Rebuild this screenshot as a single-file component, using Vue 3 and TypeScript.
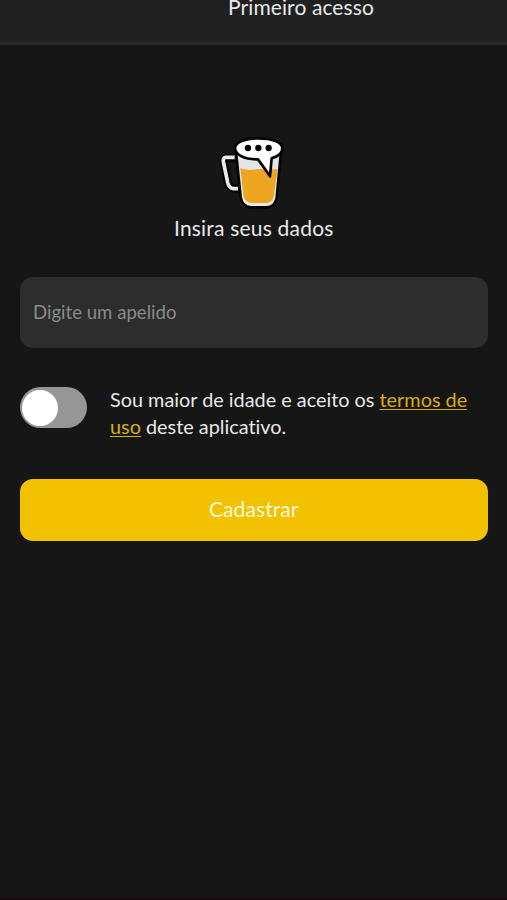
<script setup lang="ts">
import { ref } from 'vue'

const nickname = ref<string>('')
const accepted = ref<boolean>(false)
</script>

<template>
  <div class="screen">
    <header class="header"><h1 class="title">Primeiro acesso</h1></header>
    <main class="content">
      <svg class="logo" viewBox="0 0 255 264" aria-hidden="true">
        <path d="M80 91H50Q40 92 42 104L54 165Q58 180 71 181H88" fill="none" stroke="#060606" stroke-width="25" stroke-linejoin="round" />
        <path d="M74 88H47Q38 89 40 101L53 163Q57 180 70 182H84" fill="none" stroke="#e9e9e9" stroke-width="11" stroke-linejoin="round" />
        <path d="M61 106H69L75 161H71Z" fill="#191919" />
        <path d="M78 72 92 207Q96 237 122 238H170Q195 237 200 209L213 72Z" fill="#e5e5e5" stroke="#060606" stroke-width="8" />
        <path d="M91 120Q112 130 143 123L203 124L191 207Q187 224 167 225H127Q106 224 101 207Z" fill="#eda522" />
        <path d="M75 60C75 42 106 31 146 31S217 42 217 60C217 76 203 86 185 91L180 145Q161 117 144 94C101 95 75 79 75 60Z" fill="#fff" stroke="#050505" stroke-width="8" stroke-linejoin="round" />
        <circle cx="114" cy="60" r="9.5" fill="#080808" /><circle cx="145" cy="60" r="9.5" fill="#080808" /><circle cx="176" cy="60" r="9.5" fill="#080808" />
      </svg>
      <h2 class="subtitle">Insira seus dados</h2>
      <input v-model="nickname" class="field" type="text" placeholder="Digite um apelido" />
      <div class="terms">
        <button class="switch" :class="{ on: accepted }" type="button" role="switch" :aria-checked="accepted" @click="accepted = !accepted"><span class="knob"></span></button>
        <p class="terms-text">Sou maior de idade e aceito os <a class="link">termos de</a><br /><a class="link">uso</a> deste aplicativo.</p>
      </div>
      <button class="submit" type="button">Cadastrar</button>
    </main>
  </div>
</template>

<style>
body { margin: 0; background: #161616; }
</style>

<style scoped>
.screen { box-sizing: border-box; height: 900px; overflow: hidden; background: #161616; border-bottom: 2px solid #120a10; color: #e8e8e8; font-family: Lato, "Noto Sans", sans-serif; font-size: 21px; font-variant-ligatures: none; }
.header { box-sizing: border-box; height: 45px; background: #202020; border-bottom: 3px solid #292929; overflow: hidden; }
.title { margin: -6px 0 0 228px; font-size: 21px; line-height: 25px; font-weight: 400; letter-spacing: 0.1px; white-space: nowrap; }
.content { display: flex; flex-direction: column; padding: 83px 19.5px 0 20px; }
.logo { display: block; width: 85px; height: 88px; margin-left: 190px; }
.subtitle { margin: -1px 0 1px; height: 26px; font-size: 21px; line-height: 26px; font-weight: 400; text-align: center; letter-spacing: 0.2px; }
.field { box-sizing: border-box; width: 100%; height: 71px; margin-top: 35px; padding: 0 13px 2px; border: 0; border-radius: 13px; outline: 0; background: #2d2d2d; color: #e8e8e8; font: inherit; font-size: 18.6px; }
.field::placeholder { color: #8a8a8a; opacity: 1; }
.terms { display: flex; margin-top: 39px; height: 53px; }
.switch { box-sizing: border-box; flex: none; display: flex; align-items: center; width: 67px; height: 41px; padding: 0 2px; border: 0; border-radius: 21px; background: #969696; }
.switch.on { justify-content: flex-end; background: #f2c200; }
.knob { width: 36px; height: 36px; border-radius: 50%; background: #fff; }
.terms-text { margin: -1px 0 0 23px; font-size: 19.85px; line-height: 26.5px; white-space: nowrap; }
.link { color: #d9ad0c; text-decoration: underline; text-decoration-thickness: 1px; text-underline-offset: 2px; }
.submit { height: 62px; margin-top: 39px; padding: 0 0 3px; border: 0; border-radius: 13px; background: #f2c200; color: #fff8dc; font: inherit; letter-spacing: 0.1px; }
</style>
